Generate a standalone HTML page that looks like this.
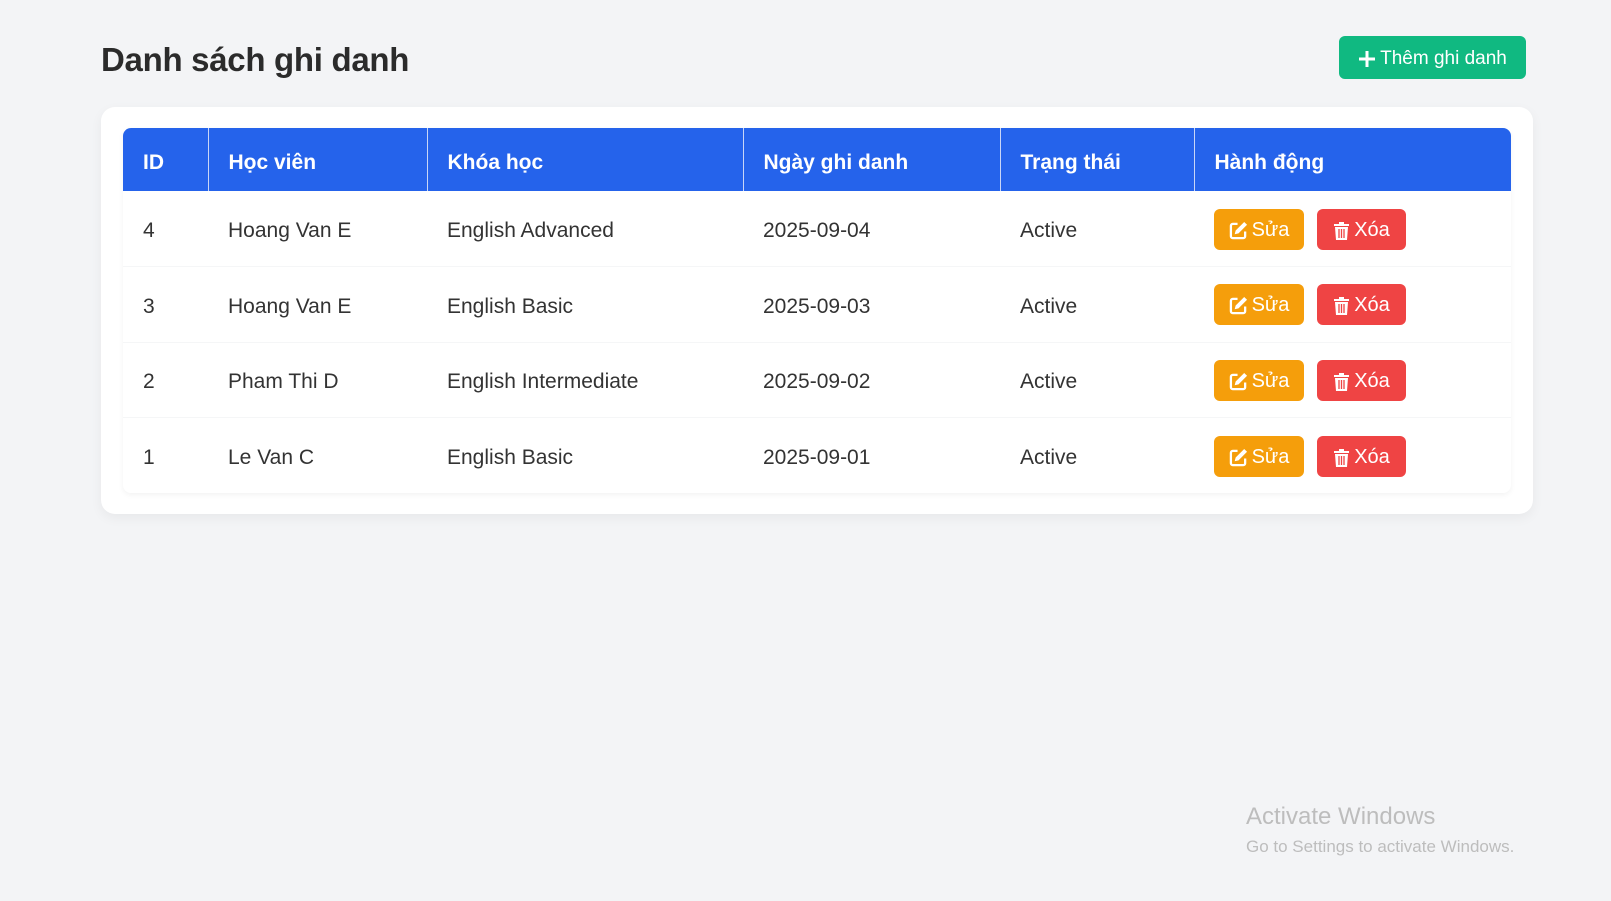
<!DOCTYPE html>
<html><head><meta charset="utf-8"><style>
*{margin:0;padding:0;box-sizing:border-box}
body{width:1611px;height:901px;background:#f3f4f6;font-family:"Segoe UI","Liberation Sans",sans-serif;position:relative;overflow:hidden;color:#333}
h1{position:absolute;left:101px;top:41px;font-size:33px;font-weight:bold;color:#2b2b2b;letter-spacing:-0.3px}
.add{position:absolute;left:1339px;top:36px;width:187px;height:43px;background:#10b981;border-radius:6px;color:#fff;font-size:19px;display:flex;align-items:center;justify-content:center;gap:4px;padding-top:2px}
.card{position:absolute;left:101px;top:107px;width:1432px;height:407px;background:#fff;border-radius:14px;box-shadow:0 4px 12px rgba(0,0,0,.05)}
table{position:absolute;left:22px;top:21px;width:1388px;border-collapse:collapse;border-radius:8px;overflow:hidden;box-shadow:0 2px 6px rgba(0,0,0,.05)}
th{background:#2563eb;color:#fff;font-weight:bold;font-size:21px;text-align:left;height:63px;padding:6px 20px 0;border-left:1px solid #c9d6f7}
th:first-child{border-left:none}
td{height:75.5px;font-size:21px;color:#333;padding:5px 20px 0;border-top:1px solid #f5f6f7}
tr:nth-child(2) td{border-top:none}
.b{display:inline-flex;align-items:center;justify-content:center;gap:4px;height:41px;border-radius:6px;color:#fff;font-size:20px;vertical-align:middle;padding-top:2px;margin-top:-4px}
.e{width:90px;background:#f59e0b}.d{width:89px;background:#ef4444;margin-left:13px}
.wm{position:absolute;left:1246px;color:#bdbdbd}
</style></head><body>
<h1>Danh sách ghi danh</h1>
<div class="add"><svg width="18" height="18" viewBox="0 0 18 18"><path d="M9 1v16M1 9h16" stroke="#fff" stroke-width="3"/></svg>Thêm ghi danh</div>
<div class="card">
<table>
<colgroup><col style="width:85px"><col style="width:219px"><col style="width:316px"><col style="width:257px"><col style="width:194px"><col></colgroup>
<tr><th>ID</th><th>Học viên</th><th>Khóa học</th><th>Ngày ghi danh</th><th>Trạng thái</th><th>Hành động</th></tr>
<tr><td>4</td><td>Hoang Van E</td><td>English Advanced</td><td>2025-09-04</td><td>Active</td><td><span class="b e"><svg width="19" height="19" viewBox="0 0 20 20"><path d="M9 3H4a2 2 0 0 0-2 2v11a2 2 0 0 0 2 2h11a2 2 0 0 0 2-2v-5" stroke="#fff" stroke-width="2.4" fill="none"/><path d="M16 1l3 3-9 9-4 1 1-4z" fill="#fff"/></svg>Sửa</span><span class="b d"><svg width="17" height="19" viewBox="0 0 17 19"><path d="M1 3h15v2H1zM6 1h5v2H6zM2 6h13l-1 13H3z" fill="#fff"/><path d="M6 8v9M8.5 8v9M11 8v9" stroke="#ef4444" stroke-width="1.3"/></svg>Xóa</span></td></tr>
<tr><td>3</td><td>Hoang Van E</td><td>English Basic</td><td>2025-09-03</td><td>Active</td><td><span class="b e"><svg width="19" height="19" viewBox="0 0 20 20"><path d="M9 3H4a2 2 0 0 0-2 2v11a2 2 0 0 0 2 2h11a2 2 0 0 0 2-2v-5" stroke="#fff" stroke-width="2.4" fill="none"/><path d="M16 1l3 3-9 9-4 1 1-4z" fill="#fff"/></svg>Sửa</span><span class="b d"><svg width="17" height="19" viewBox="0 0 17 19"><path d="M1 3h15v2H1zM6 1h5v2H6zM2 6h13l-1 13H3z" fill="#fff"/><path d="M6 8v9M8.5 8v9M11 8v9" stroke="#ef4444" stroke-width="1.3"/></svg>Xóa</span></td></tr>
<tr><td>2</td><td>Pham Thi D</td><td>English Intermediate</td><td>2025-09-02</td><td>Active</td><td><span class="b e"><svg width="19" height="19" viewBox="0 0 20 20"><path d="M9 3H4a2 2 0 0 0-2 2v11a2 2 0 0 0 2 2h11a2 2 0 0 0 2-2v-5" stroke="#fff" stroke-width="2.4" fill="none"/><path d="M16 1l3 3-9 9-4 1 1-4z" fill="#fff"/></svg>Sửa</span><span class="b d"><svg width="17" height="19" viewBox="0 0 17 19"><path d="M1 3h15v2H1zM6 1h5v2H6zM2 6h13l-1 13H3z" fill="#fff"/><path d="M6 8v9M8.5 8v9M11 8v9" stroke="#ef4444" stroke-width="1.3"/></svg>Xóa</span></td></tr>
<tr><td>1</td><td>Le Van C</td><td>English Basic</td><td>2025-09-01</td><td>Active</td><td><span class="b e"><svg width="19" height="19" viewBox="0 0 20 20"><path d="M9 3H4a2 2 0 0 0-2 2v11a2 2 0 0 0 2 2h11a2 2 0 0 0 2-2v-5" stroke="#fff" stroke-width="2.4" fill="none"/><path d="M16 1l3 3-9 9-4 1 1-4z" fill="#fff"/></svg>Sửa</span><span class="b d"><svg width="17" height="19" viewBox="0 0 17 19"><path d="M1 3h15v2H1zM6 1h5v2H6zM2 6h13l-1 13H3z" fill="#fff"/><path d="M6 8v9M8.5 8v9M11 8v9" stroke="#ef4444" stroke-width="1.3"/></svg>Xóa</span></td></tr>
</table>
</div>
<div class="wm" style="top:803px;font-size:24px">Activate Windows</div>
<div class="wm" style="top:837px;font-size:17px">Go to Settings to activate Windows.</div>
</body></html>
